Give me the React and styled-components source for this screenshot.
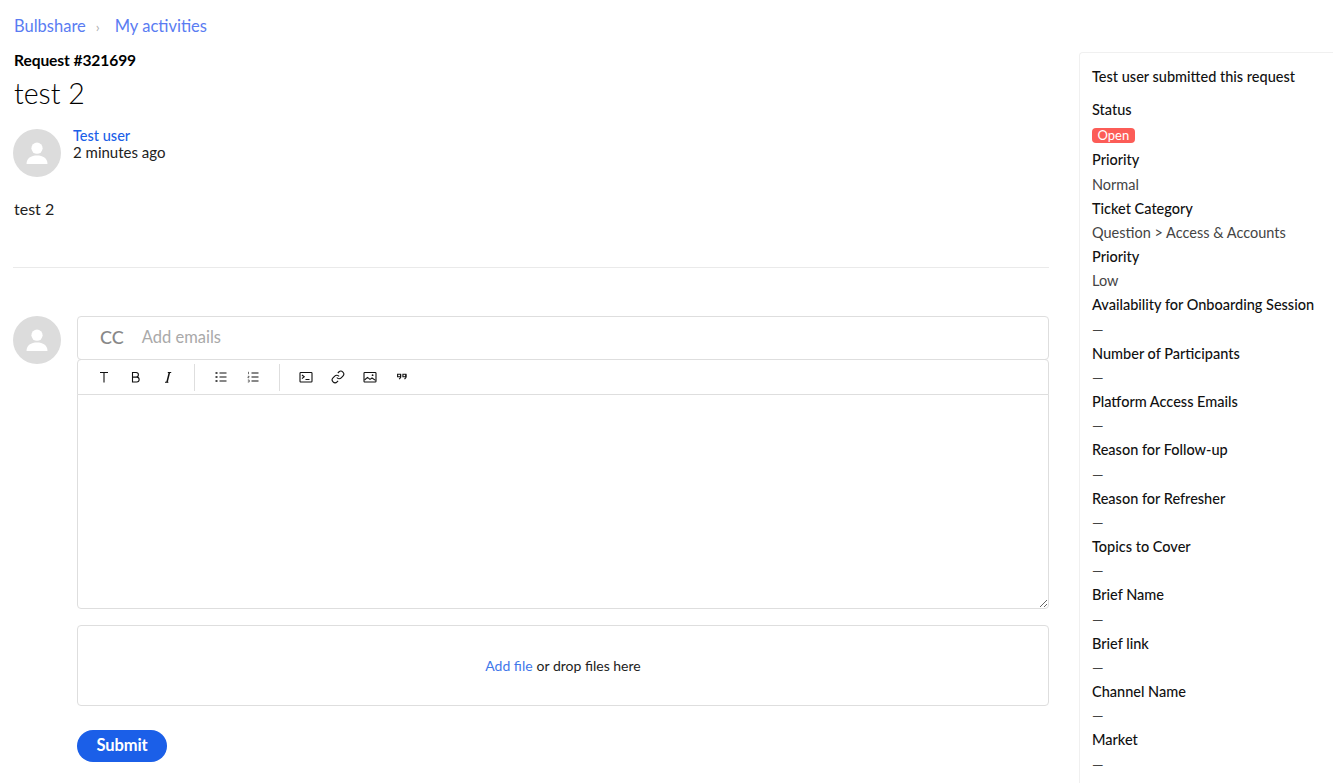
import React from 'react';
import styled, { createGlobalStyle } from 'styled-components';

const Global = createGlobalStyle`
  html, body { margin: 0; padding: 0; background: #fff; overflow: hidden; }
  body { font-family: Lato, "Noto Sans", sans-serif; color: #111; font-size: 14px; }
  * { box-sizing: border-box; }
`;
const Page = styled.div`
  display: flex; align-items: flex-start; width: 1333px; height: 783px; overflow: hidden; padding-left: 13px;
`;
const Main = styled.main`
  width: 1036px; flex: none; display: flex; flex-direction: column;
`;
const Crumbs = styled.nav`
  display: flex; align-items: center; height: 20px; margin-top: 16px; padding-left: 1px;
  font-size: 16.5px;
`;
const Crumb = styled.a`color: #5a7cf2;`;
const Sep = styled.span`
  color: #b0b0b0; font-size: 14px; margin: 0 15px 0 10px;
`;
const ReqId = styled.div`
  margin-top: 14px; padding-left: 1px; font-size: 15.6px; line-height: 20px; font-weight: 700; letter-spacing: -.1px; color: #000;
`;
const Title = styled.h1`
  margin: 3px 0 0; padding-left: 1px; font-size: 28.5px; line-height: 40px; font-weight: 300; color: #000;
`;
const Author = styled.div`
  display: flex; gap: 12px; margin-top: 16px;
`;
const AvatarCircle = styled.div`
  width: 48px; height: 48px; border-radius: 50%; background: #dcdcdc; flex: none; display: flex; align-items: center; justify-content: center;
`;
const AuthorMeta = styled.div`
  display: flex; flex-direction: column; font-size: 14.5px; line-height: 16px; margin-top: -1px;
`;
const AuthorName = styled.a`color: #1b5fe8; font-weight: 500;`;
const Time = styled.span`color: #222; font-size: 15px;`;
const Body = styled.p`
  margin: 22px 0 0; padding-left: 1px; font-size: 16px; line-height: 20px; color: #222;
`;
const Rule = styled.hr`
  border: 0; border-top: 1px solid #eaeaea; margin: 48px 0 48px; width: 100%;
`;
const Reply = styled.div`
  display: flex; gap: 16px;
`;
const Form = styled.div`
  flex: 1; display: flex; flex-direction: column; min-width: 0;
`;
const CcBox = styled.div`
  height: 44px; border: 1px solid #dedede; border-radius: 4px; display: flex; align-items: center; padding: 0 0 3px 22px; gap: 18px;
`;
const CcLabel = styled.span`font-size: 18px; color: #888; font-weight: 500;`;
const CcInput = styled.span`font-size: 16.5px; color: #a9a9a9;`;
const Toolbar = styled.div`
  height: 36px; margin-top: -1px; border: 1px solid #dedede; border-radius: 4px 4px 0 0; display: flex; align-items: center; padding-left: 9.5px;
`;
const ToolGroup = styled.div`
  display: flex; align-items: center; height: 27px; padding-right: ${p => p.$pad}px;
  & + & { border-left: 1px solid #dedede; padding-left: ${p => p.$left}px; }
`;
const ToolBtn = styled.span`
  width: 32px; height: 20px; display: flex; align-items: center; justify-content: center; color: #111;
`;
const Editor = styled.textarea`
  display: block; width: 100%; height: 215px; margin-top: -1px; border: 1px solid #dedede; border-radius: 0 0 4px 4px; outline: 0; resize: vertical; background: #fff;
`;
const Drop = styled.div`
  margin-top: 16px; height: 81px; border: 1px solid #dedede; border-radius: 4px; display: flex; align-items: center; justify-content: center;
  font-size: 14px; color: #222;
`;
const DropLink = styled.a`color: #3f78ea; margin-right: 4px;`;
const Submit = styled.button`
  margin-top: 24px; width: 90px; height: 32px; padding: 0 0 3px; border: 0; border-radius: 16px; background: #1b5fe8; color: #fff;
  font: 700 16.5px Lato, sans-serif; letter-spacing: -.1px;
`;
const Side = styled.aside`
  margin: 52px 0 0 30px; flex: 1; height: 760px; border: 1px solid #f0f0f0; border-right: 0; border-bottom: 0; border-radius: 4px 0 0 0;
  padding: 12px 0 0 12px; font-size: 14.5px; line-height: 24.17px;
`;
const SideHead = styled.div`font-weight: 500; color: #111; margin-bottom: 9px;`;
const Field = styled.div`font-weight: 500; color: #111; white-space: nowrap;`;
const Val = styled.div`color: #444; white-space: nowrap;`;
const BadgeRow = styled.div`height: 26px; padding-top: 5px; line-height: 15px;`;
const Badge = styled.span`
  display: inline-block; height: 15px; padding: 0 5.5px; border-radius: 4px; background: #fc5c57; color: #fff; font-size: 13px; line-height: 15px;
`;

const Person = () => (
  <svg width="24" height="24" viewBox="0 0 24 24" fill="#fff" aria-hidden="true">
    <circle cx="12" cy="7.2" r="5.6" />
    <path d="M1.5 23c0-6 4.6-8.6 10.5-8.6S22.5 17 22.5 23z" />
  </svg>
);
const Icon = ({ children }) => (
  <svg width="14" height="14" viewBox="0 0 14 14" fill="none" stroke="currentColor" strokeWidth="1.1" aria-hidden="true">{children}</svg>
);
const tools = [
  [
    <Icon key="t"><path d="M3 2.5h8M7 2.5v10" /></Icon>,
    <Icon key="b"><path d="M3.5 2.5h3.6a2.3 2.3 0 010 4.6H3.5zM3.5 7.1h4.2a2.45 2.45 0 010 4.9H3.5z" /></Icon>,
    <Icon key="i"><path d="M8.4 2.5L6 12.2" strokeWidth="1.5" /><path d="M6.8 2.5h3.4M4 12.2h3.4" /></Icon>,
  ],
  [
    <Icon key="ul"><path d="M5.5 3h7M5.5 7h7M5.5 11h7" /><path d="M1.5 2.2h2v1.6h-2zM1.5 6.2h2v1.6h-2zM1.5 10.2h2v1.6h-2z" fill="currentColor" stroke="none" /></Icon>,
    <Icon key="ol"><path d="M5.5 3h7M5.5 7h7M5.5 11h7" /><path d="M2.5 1.8v2.4M1.8 6.3h1.4l-1.4 1.4h1.4M1.8 10h1.4v2H1.8" strokeWidth=".8" opacity=".75" /></Icon>,
  ],
  [
    <Icon key="code"><rect x="1" y="2.5" width="12" height="9.5" rx=".8" /><path d="M3 5l2.2 1.8L3 8.6M6.5 9.5h4" /></Icon>,
    <Icon key="link"><g transform="scale(.58)" strokeWidth="1.9"><path d="M10 13a5 5 0 0 0 7.54.54l3-3a5 5 0 0 0-7.07-7.07l-1.72 1.71" /><path d="M14 11a5 5 0 0 0-7.54-.54l-3 3a5 5 0 0 0 7.07 7.07l1.71-1.71" /></g></Icon>,
    <Icon key="img"><rect x="1" y="2.5" width="12" height="9.5" rx=".8" /><path d="M1.5 10l3-2.6 2.5 2L9 8l3.5 2.4" /><circle cx="9.6" cy="5.2" r=".9" fill="currentColor" stroke="none" /></Icon>,
    <Icon key="q"><path d="M2.6 4.2h3v2.6h-3zM7.9 4.2h3v2.6h-3z" /><path d="M5.6 4.2v3.4L4.2 9.2M10.9 4.2v3.4L9.5 9.2" /></Icon>,
  ],
];

const fields = [
  ['Priority', 'Normal'],
  ['Ticket Category', 'Question > Access & Accounts'],
  ['Priority', 'Low'],
  ['Availability for Onboarding Session', '—'],
  ['Number of Participants', '—'],
  ['Platform Access Emails', '—'],
  ['Reason for Follow-up', '—'],
  ['Reason for Refresher', '—'],
  ['Topics to Cover', '—'],
  ['Brief Name', '—'],
  ['Brief link', '—'],
  ['Channel Name', '—'],
  ['Market', '—'],
];

export default function App() {
  return (
    <Page>
      <Global />
      <Main>
        <Crumbs><Crumb>Bulbshare</Crumb><Sep>›</Sep><Crumb>My activities</Crumb></Crumbs>
        <ReqId>Request #321699</ReqId>
        <Title>test 2</Title>
        <Author>
          <AvatarCircle><Person /></AvatarCircle>
          <AuthorMeta><AuthorName>Test user</AuthorName><Time>2 minutes ago</Time></AuthorMeta>
        </Author>
        <Body>test 2</Body>
        <Rule />
        <Reply>
          <AvatarCircle><Person /></AvatarCircle>
          <Form>
            <CcBox><CcLabel>CC</CcLabel><CcInput>Add emails</CcInput></CcBox>
            <Toolbar>
              {tools.map((g, i) => (
                <ToolGroup key={i} $pad={i === 2 ? 0 : i === 0 ? 10.5 : 10} $left={10}>
                  {g.map((icon, j) => <ToolBtn key={j}>{icon}</ToolBtn>)}
                </ToolGroup>
              ))}
            </Toolbar>
            <Editor />
            <Drop><DropLink>Add file</DropLink> or drop files here</Drop>
            <div><Submit>Submit</Submit></div>
          </Form>
        </Reply>
      </Main>
      <Side>
        <SideHead>Test user submitted this request</SideHead>
        <Field>Status</Field>
        <BadgeRow><Badge>Open</Badge></BadgeRow>
        {fields.map(([k, v], i) => (
          <React.Fragment key={i}>
            <Field>{k}</Field>
            <Val>{v}</Val>
          </React.Fragment>
        ))}
      </Side>
    </Page>
  );
}
